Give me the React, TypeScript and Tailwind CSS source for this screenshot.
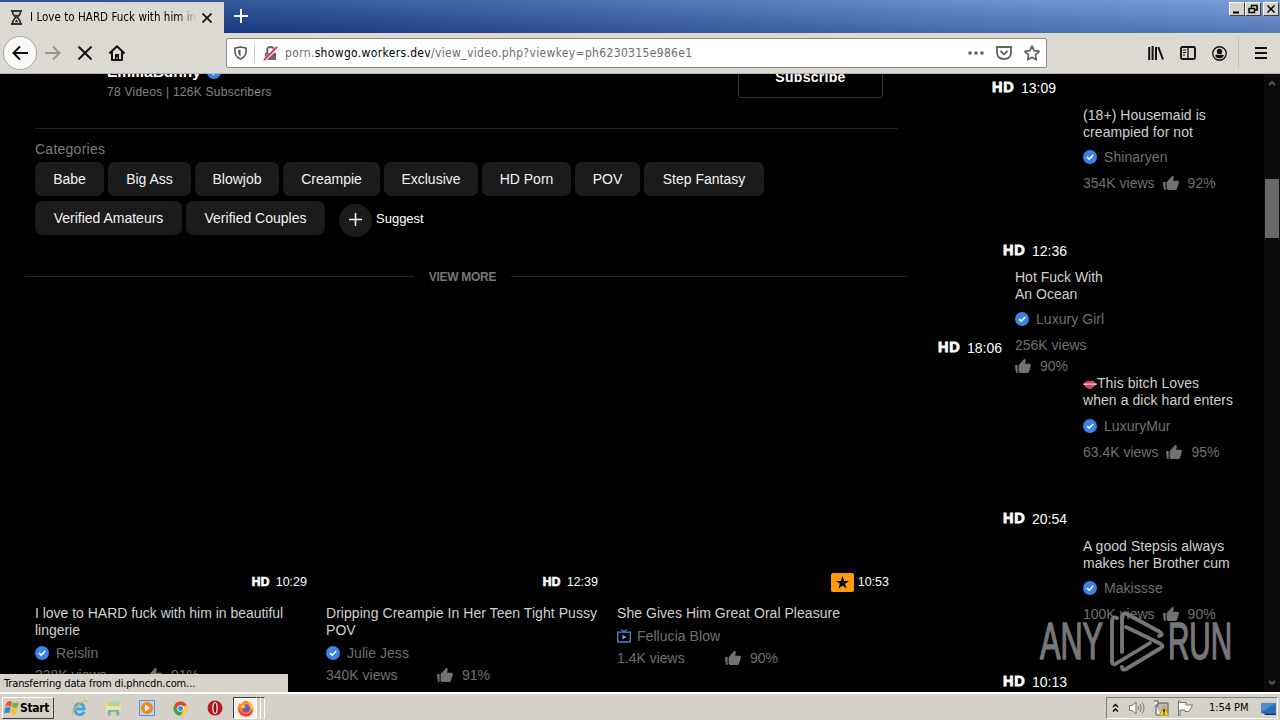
import React from "react";

const arial = "font-['Liberation_Sans',Arial,sans-serif]";
const ui = "font-['DejaVu_Sans_Condensed','DejaVu_Sans',sans-serif]";

function Verified() {
  return (
    <svg viewBox="0 0 14 14" className="h-[14px] w-[14px] shrink-0">
      <circle cx="7" cy="7" r="7" fill="#3c84e4" />
      <path d="M4 7.2 6.2 9.2 10.2 5" fill="none" stroke="#fff" strokeWidth="1.6" />
    </svg>
  );
}

function Thumb() {
  return (
    <svg viewBox="0 0 16 14" className="h-[14px] w-[16px] shrink-0" fill="#727272">
      <path d="M0 6h2.6v8H1.2Q.2 11 0 6ZM3.6 6.2 8 1.2Q8.600 0 9.800 0 11 .6 10.700 2L10 4.800H14.600Q16.200 5 15.900 6.600L14 12.800Q13.600 14 12.400 14H5.200L3.600 13Z" />
    </svg>
  );
}

function Duration({ time, small = false }: { time: string; small?: boolean }) {
  return (
    <div className={small ? "flex h-5 items-center text-[12.500px] text-white" : "flex h-5 items-center text-[14px] text-white"}>
      <span className={small ? "mr-[5px] w-[19px] text-[12px] font-bold tracking-[0.400px] [-webkit-text-stroke:0.700px_white]" : "mr-[5px] w-[24px] text-[14.500px] font-bold tracking-[0.900px] [-webkit-text-stroke:0.800px_white]"}>HD</span>
      <span>{time}</span>
    </div>
  );
}

function Author({ name, channel = false }: { name: string; channel?: boolean }) {
  return (
    <div className="flex h-5 items-center gap-[7px] text-[14px] tracking-[0.050px] text-[#707070]">
      {channel ? (
        <svg viewBox="0 0 14 14" className="-mr-px h-[14px] w-[14px]" fill="none" stroke="#4b86d2" strokeWidth="1.300">
          <path d="M.7 3.200H13.300V13H.7ZM4.500.5 7 3 9.500.5" />
          <path d="m5.500 5.800 4 2.300-4 2.300Z" fill="#75a9ec" stroke="none" />
        </svg>
      ) : (
        <Verified />
      )}
      <span>{name}</span>
    </div>
  );
}

function Percent({ value }: { value: string }) {
  return (
    <span className="flex items-center gap-[9px]">
      <Thumb />
      <span>{value}</span>
    </span>
  );
}

function SideItem({ lines, author, views, percent, lips = false }: { lines: string[]; author: string; views: string; percent: string; lips?: boolean }) {
  return (
    <div className="ml-[158px] whitespace-nowrap text-[14px]">
      <div className="leading-[17px] tracking-[0.060px] text-[#d0d0d0]">
        <div className="flex items-center">
          {lips && (
            <svg viewBox="0 0 15 10" className="mt-px h-[9px] w-[14px]">
              <path d="M0 4.500Q3 1 5.500.5L7.500 1.500 9.500.5Q12 1 15 4.500Q10 10 7.500 10 4 10 0 4.500" fill="#d7435c" />
              <path d="M0 4H15V5.300H0Z" fill="#f4dadd" />
            </svg>
          )}
          {lines[0]}
        </div>
        <div>{lines[1]}</div>
      </div>
      <div className={lips ? "mt-[7px]" : "mt-[6px]"}><Author name={author} /></div>
      <div className="mt-[6px] flex h-5 items-center gap-[8px] text-[#707070]">
        <span>{views}</span>
        <Percent value={percent} />
      </div>
    </div>
  );
}

function Card({ title, author, views, percent, time, tracking, star = false }: { title: string[]; author: string; views: string; percent: string; time: string; tracking: string; star?: boolean }) {
  return (
    <div className="w-[272px] whitespace-nowrap">
      <div className="flex h-5 items-center justify-end">
        {star ? (
          <>
            <span className="mr-1 flex h-[19px] w-[23px] items-center justify-center rounded-[2px] bg-[#ff9a0e]">
              <svg viewBox="0 0 24 24" className="h-[13px] w-[13px]"><path d="m12 0 3 9h9l-7.300 5.300L19.500 23 12 17.700 4.500 23l2.800-8.700L0 9h9Z" /></svg>
            </span>
            <span className="text-[12.500px] text-white">{time}</span>
          </>
        ) : (
          <Duration time={time} small />
        )}
      </div>
      <div className={`mt-[13px] text-[14px] leading-[17px] text-[#d0d0d0] ${tracking}`}>
        {title.map((t) => <div key={t}>{t}</div>)}
      </div>
      <div className={star ? "mt-[4px] tracking-[-0.100px]" : "-ml-px mt-[4px] pl-px"}><Author name={author} channel={star} /></div>
      <div className="mt-[2px] flex h-5 items-center text-[14px] text-[#707070]">
        <span className={star ? "w-[108px]" : "w-[111px]"}>{views}</span>
        <Percent value={percent} />
      </div>
    </div>
  );
}

function Chip({ label, width }: { label: string; width: string }) {
  return <div className={`flex h-[34px] items-center justify-center rounded-[7px] bg-[#1b1b1b] text-[14px] text-[#f2f2f2] ${width}`}>{label}</div>;
}

function WinButton({ children }: { children: React.ReactNode }) {
  return (
    <span className="flex h-[14px] w-[16px] items-center justify-center border border-t-white border-r-[#404040] border-b-[#404040] border-l-white bg-[#d6d2ca]">
      <svg viewBox="0 0 12 10" className="h-[10px] w-[12px]" fill="none" stroke="#000" strokeWidth="1.500">{children}</svg>
    </span>
  );
}

function Browser() {
  return (
    <header className={`relative shrink-0 ${ui}`}>
      <div className="flex h-[33px] bg-[linear-gradient(90deg,#14397f_0%,#22458c_25%,#5c83c4_75%,#7298d4_100%)]">
        <div className="flex h-full w-full bg-[linear-gradient(180deg,rgba(150,195,240,0.2),rgba(10,30,100,0.26))]">
          <div className="mt-[2px] flex w-[224px] items-center bg-[#dcd9d2]">
            <svg viewBox="0 0 14 16" className="ml-[10px] h-[15px] w-[13px]" fill="none" stroke="#333" strokeWidth="1.900">
              <path d="M1 1H13M1 15H13M3 1V4L6 8 3 12V15M11 1V4L8 8 11 12V15" />
              <path d="M5 5h4L7 8ZM5 13h4L7 10Z" fill="#333" stroke="none" />
            </svg>
            <span className="ml-[7px] w-[167px] overflow-hidden whitespace-nowrap bg-[linear-gradient(90deg,#000_88%,transparent)] bg-clip-text text-[11.500px] tracking-[0.030px] text-transparent">I Love to HARD Fuck with him in Be</span>
            <svg viewBox="0 0 10 10" className="ml-[5px] h-[10px] w-[10px]" stroke="#111" strokeWidth="1.700"><path d="m.5.5 9 9M9.500.5l-9 9" /></svg>
          </div>
          <svg viewBox="0 0 14 14" className="mt-[9px] ml-[10px] h-[14px] w-[14px]" stroke="#fff" strokeWidth="2"><path d="M7 0V14M0 7H14" /></svg>
          <div className="mt-[2px] mr-[1px] ml-auto flex">
            <WinButton><path d="M2 8.500H8" strokeWidth="2" /></WinButton>
            <WinButton><path d="M4.500 3.500V1.500H10V6H8M2 4.500H7.500V8.500H2Z" /></WinButton>
            <span className="w-[2px]" />
            <WinButton><path d="m2.500 1.500 7 7M9.500 1.500l-7 7" /></WinButton>
          </div>
        </div>
      </div>
      <div className="flex h-[41px] items-center border-b border-[#b5b2ab] bg-[#dcd9d2]">
        <span className="ml-[3px] flex h-[34px] w-[34px] items-center justify-center rounded-full border border-[#aaa7a0] bg-[#f8f8f6]">
          <svg viewBox="0 0 16 16" className="h-4 w-4" fill="none" stroke="#111" strokeWidth="2"><path d="M16 8H1.500M8 1.500 1.500 8 8 14.500" /></svg>
        </span>
        <svg viewBox="0 0 16 16" className="ml-[8px] h-4 w-4" fill="none" stroke="#999690" strokeWidth="2"><path d="M0 8H14.500M8 1.500 14.500 8 8 14.500" /></svg>
        <svg viewBox="0 0 14 14" className="ml-[17px] h-[14px] w-[14px]" stroke="#111" strokeWidth="2"><path d="m.5.5 13 13M13.500.5l-13 13" /></svg>
        <svg viewBox="0 0 16 16" className="ml-[17px] h-4 w-4" fill="none" stroke="#111" strokeWidth="2"><path d="M.5 8.500 8 1.200 15.500 8.500M3 7V15H13V7" strokeLinejoin="round" /><path d="M6 15V9H10V15H8.500V12H7.500V15Z" fill="#111" stroke="none" /></svg>
        <div className="ml-[101px] flex h-[30px] w-[821px] items-center rounded-[2px] border border-[#8d8a84] bg-white">
          <svg viewBox="0 0 14 15" className="ml-[7px] h-[14px] w-[13px]" fill="none" stroke="#555" strokeWidth="1.700"><path d="M7 1 13 2.200V6Q13 11.500 7 14 1 11.500 1 6V2.200Z" /><path d="M7 4V11Q4.500 9.500 4.500 7V4.500Z" fill="#555" stroke="none" /></svg>
          <span className="ml-[7px] h-[20px] w-px bg-[#ccc]" />
          <svg viewBox="0 0 16 16" className="ml-[8px] h-[15px] w-[15px]" fill="none"><path d="M2 7.500H14V15H2Z" fill="#666" /><path d="M4.500 8V4Q4.500 1 8 1T11.500 4V8" stroke="#666" strokeWidth="2" /><path d="M1 15.500 15 1.500" stroke="#fff" strokeWidth="3.500" /><path d="M1 15 15 1" stroke="#e22850" strokeWidth="2" /></svg>
          <span className="ml-[7px] whitespace-nowrap text-[12px] tracking-[0.340px] text-[#6c6c6c]">porn.<span className="text-black">showgo.workers.dev</span>/view_video.php?viewkey=ph6230315e986e1</span>
          <svg viewBox="0 0 16 4" className="ml-auto h-1 w-4" fill="#606060"><circle cx="2" cy="2" r="1.800" /><circle cx="8" cy="2" r="1.800" /><circle cx="14" cy="2" r="1.800" /></svg>
          <svg viewBox="0 0 16 14" className="ml-[12px] h-[14px] w-4" fill="none" stroke="#606060" strokeWidth="1.800"><path d="M1 1H15V6Q15 13 8 13T1 6ZM4.500 5 8 8.300 11.500 5" /></svg>
          <svg viewBox="0 0 16 16" className="mr-[6px] ml-[12px] h-4 w-4" fill="none" stroke="#606060" strokeWidth="1.700" strokeLinejoin="round"><path d="m8 1 2.100 4.700 5 .6-3.700 3.500 1 5L8 12.300 3.600 14.800l1-5L.9 6.300l5-.6Z" /></svg>
        </div>
        <svg viewBox="0 0 16 14" className="ml-[101px] h-[14px] w-4" fill="none" stroke="#111" strokeWidth="2"><path d="M1.200 1V14M4.600 0V14M8 1V14M10.300 1 15 13.500" /></svg>
        <svg viewBox="0 0 16 14" className="ml-[16px] h-[14px] w-4" fill="none" stroke="#111" strokeWidth="1.900"><rect x="1" y="1" width="14" height="12" rx="1.500" /><path d="M8 1V13" strokeWidth="1.300" /><path d="M3 4H6M3 6.500H6M3 9H5" strokeWidth="1" /></svg>
        <svg viewBox="0 0 16 16" className="ml-[16px] h-[15px] w-[15px]" fill="none" stroke="#111" strokeWidth="1.400"><circle cx="8" cy="8" r="7.200" /><circle cx="8" cy="5.800" r="2.800" fill="#111" stroke="none" /><path d="M3 10.500Q5.500 8 8 9.500 10.500 8 13 10.500 11 13.200 8 13.200T3 10.500" fill="#111" stroke="none" /></svg>
        <span className="ml-[11px] h-[32px] w-px bg-[#c7c3bb]" />
        <svg viewBox="0 0 12 12" className="ml-[16px] h-[12px] w-[12px]" stroke="#111" strokeWidth="2"><path d="M0 1H12M0 6H12M0 11H12" /></svg>
      </div>
    </header>
  );
}

function Watermark() {
  return (
    <svg viewBox="0 0 200 64" className="absolute top-[610px] left-[1036px] h-[64px] w-[200px]" fill="none" stroke="#777" strokeWidth="3.800" strokeLinecap="round" strokeLinejoin="round">
      <g className={arial} fill="#777" strokeWidth="1.600" fontSize="52">
        <text x="4" y="49" textLength="63" lengthAdjust="spacingAndGlyphs">ANY</text>
        <text x="132" y="49" textLength="64" lengthAdjust="spacingAndGlyphs">RUN</text>
      </g>
      <path d="M81 8Q76 6 76 11V52Q77 56 81 53L114 33" />
      <path d="M86 42V6Q87 2 91 4L124 22Q128 25 123 26" />
      <path d="M90 17 125 34Q128 36 125 38L90 59Q86 61 86 57" />
    </svg>
  );
}

function Taskbar() {
  return (
    <footer className={`flex h-[28px] shrink-0 items-center border-t-2 border-white bg-[#d5d0c8] pt-[2px] ${ui}`}>
      <div className="ml-[2px] flex h-[22px] w-[52px] items-center border border-t-white border-r-[#404040] border-b-[#404040] border-l-white">
        <svg viewBox="0 0 16 16" className="ml-px h-4 w-4 shrink-0"><path d="M3 2Q6 0 8 2L7 7Q4 5 1 7Z" fill="#e85d2e" /><path d="M9 2Q12 4 15 2L13 8Q11 9 8 7Z" fill="#76b82f" /><path d="M1 8Q4 6 7 8L5 13Q3 12 0 14Z" fill="#3f83cf" /><path d="M8 8Q10 10 13 9L12 14Q9 16 6 13Z" fill="#f4bf28" /></svg>
        <span className="text-[12px] font-bold tracking-[-0.300px]">Start</span>
      </div>
      <svg viewBox="0 0 18 18" className="ml-[17px] h-[17px] w-[17px]" fill="none"><path d="M14 12.500Q12 16 8.500 15.500 4 14.500 4 9.500 4.500 4.500 9 4 14 4.500 14 9.500H5" stroke="#42a7de" strokeWidth="3" /><path d="M2 16Q-1 13 8 5T17 3" stroke="#e3b94b" strokeWidth="1.300" /></svg>
      <svg viewBox="0 0 18 16" className="ml-[17px] h-[16px] w-[17px]"><path d="M1 2H7L8 4H16V15H1Z" fill="#ecd27b" /><path d="M4 1H15V6H4Z" fill="#a7d6a0" /><path d="M1 6H17V12H1Z" fill="#f3e2a0" /><path d="M3 10H15V16H12V12H6V16H3Z" fill="#61b4dc" /></svg>
      <svg viewBox="0 0 16 16" className="ml-[17px] h-4 w-4"><path d="M.5.5H15.500V15.500H.5Z" fill="#b8d7f1" stroke="#5c93c6" /><circle cx="8" cy="8" r="6" fill="#f18518" /><path d="m6 4.500 5.500 3.500L6 11.500Z" fill="#fff" /></svg>
      <svg viewBox="0 0 16 16" className="ml-[18px] h-[15px] w-[15px]"><circle cx="8" cy="8" r="7.500" fill="#f6cc38" /><path d="M1.500 4.200A7.500 7.500 0 0 1 14.800 5H8L5 10Z" fill="#dd4638" /><path d="M1.500 4.200A7.500 7.500 0 0 0 8 15.500L11 10H5Z" fill="#39a354" /><circle cx="8" cy="8" r="3.500" fill="#fff" /><circle cx="8" cy="8" r="2.700" fill="#4285e7" /></svg>
      <svg viewBox="0 0 16 16" className="ml-[19px] h-4 w-4"><circle cx="8" cy="8" r="7.500" fill="#bd1720" /><ellipse cx="8" cy="8" rx="2.800" ry="6" fill="#fff" /><ellipse cx="8" cy="8" rx="1.500" ry="5" fill="#8a1018" /></svg>
      <div className="ml-[10px] flex h-[22px] w-[24px] items-center justify-center border border-t-[#404040] border-r-white border-b-white border-l-[#404040] bg-[#f5f3f0]">
        <svg viewBox="0 0 16 16" className="h-[17px] w-[17px]"><path d="M2 3 4 4Q6 0 10 1 15 3 15.500 8 15 15.500 8 15.500T.5 8Z" fill="#ff8c22" /><path d="M1 7Q2 15 8 15.500T15 9Q12 13 8 13T1 7" fill="#f33b45" /><circle cx="8.500" cy="8" r="3.700" fill="#7554c5" /><path d="M4 5Q8 4 8 7L5 8ZM10 1Q15 3 15 9L12 6Z" fill="#ffd234" /></svg>
      </div>
      <span className="h-[22px] w-[4px] border-t border-r border-t-[#404040] border-r-white" />
      <span className="h-[22px] w-[4px] border-t border-r border-t-[#404040] border-r-white" />
      <div className="mr-[2px] ml-auto flex h-[22px] w-[172px] items-center border border-t-[#808080] border-r-white border-b-white border-l-[#808080]">
        <svg viewBox="0 0 7 10" className="ml-[5px] h-[10px] w-[7px]" fill="none" stroke="#000" strokeWidth="1.300"><path d="m1 4 2.500-2.500L6 4M1 8.500 3.500 6 6 8.500" /></svg>
        <svg viewBox="0 0 16 14" className="ml-[10px] h-[14px] w-4" fill="none" stroke="#77746f"><path d="M.5 4.500H3L7 1V13L3 9.500H.5Z" fill="#f8f8f8" /><path d="M9 5Q10.500 7 9 9M11 3Q13.500 7 11 11M13 1.500Q17 7 13 12.500" /></svg>
        <svg viewBox="0 0 16 16" className="ml-[8px] h-4 w-4"><path d="M4 3H15V13H4Z" fill="#bbb" stroke="#555" /><path d="M1 1H5V5H3V15H8" fill="#eee" stroke="#555" /><path d="m11 6 5 9.500H6Z" fill="#f5cb19" stroke="#987810" strokeWidth=".5" /><path d="M11 9V12.500M11 13.500V14.500" stroke="#000" strokeWidth="1.300" /></svg>
        <svg viewBox="0 0 16 16" className="ml-[8px] h-4 w-4" fill="#fff" stroke="#77746f"><path d="M1.500 1V15.500H3V10H8V11.500H12L15.500 5H9V2.500H3V1Z" /></svg>
        <span className="ml-[16px] whitespace-nowrap text-[11px] tracking-[-0.050px]">1:54 PM</span>
        <svg viewBox="0 0 16 14" className="mr-[1px] ml-auto h-[13px] w-[15px]"><path d="M0 1H16V12H0Z" fill="#286cbe" /><path d="M0 1H16L0 11Z" fill="#4c8cd5" /><path d="M2 12H16V14H5Z" fill="#12325f" /></svg>
      </div>
    </footer>
  );
}

export default function App() {
  return (
    <div className={`relative flex h-[720px] w-[1280px] flex-col overflow-hidden bg-black ${arial}`}>
      <Browser />
      <div className="flex h-[618px] overflow-hidden">
        <main className="w-[925px] shrink-0">
          <div className="flex h-[54px] items-start pl-[107px]">
            <div className="-mt-[11px] w-[631px]">
              <div className="flex h-[18px] items-center gap-[6px] text-[15.500px] font-bold text-white">EmiliaBunny <Verified /></div>
              <div className="mt-px h-5 text-[12px] leading-5 tracking-[0.250px] text-[#858585]">78 Videos | 126K Subscribers</div>
            </div>
            <div className="-mt-[18px] flex h-[42px] w-[145px] items-center justify-center rounded-[3px] border border-[#303030] text-[14px] font-bold tracking-[0.300px] text-white">Subscribe</div>
          </div>
          <div className="ml-[35px] h-px w-[863px] bg-[#242424]" />
          <div className="mt-[10px] ml-[35px] h-5 text-[14px] leading-5 tracking-[0.250px] text-[#7d7d7d]">Categories</div>
          <div className="mt-[3px] ml-[35px] flex gap-1">
            <Chip label="Babe" width="w-[69px]" />
            <Chip label="Big Ass" width="w-[83px]" />
            <Chip label="Blowjob" width="w-[84px]" />
            <Chip label="Creampie" width="w-[97px]" />
            <Chip label="Exclusive" width="w-[94px]" />
            <Chip label="HD Porn" width="w-[89px]" />
            <Chip label="POV" width="w-[65px]" />
            <Chip label="Step Fantasy" width="w-[120px]" />
          </div>
          <div className="mt-[5px] ml-[35px] flex gap-1">
            <Chip label="Verified Amateurs" width="w-[147px]" />
            <Chip label="Verified Couples" width="w-[139px]" />
            <div className="mt-[3px] ml-[10px] flex h-[33px] w-[33px] items-center justify-center rounded-full bg-[#1b1b1b]">
              <svg viewBox="0 0 13 13" className="-mt-[2px] h-[13px] w-[13px]" stroke="#fff" strokeWidth="1.500"><path d="M6.500 0V13M0 6.500H13" /></svg>
            </div>
            <span className="text-[13px] leading-[35px] text-white">Suggest</span>
          </div>
          <div className="mt-[29px] ml-[25px] flex h-5 w-[883px] items-center text-[12px] font-bold tracking-[-0.300px] text-[#777]">
            <span className="h-px w-[389px] bg-[#242424]" />
            <span className="w-[97px] pt-px text-center">VIEW MORE</span>
            <span className="h-px flex-1 bg-[#242424]" />
          </div>
          <div className="mt-[286px] ml-[35px] flex gap-[19px]">
            <Card title={["I love to HARD fuck with him in beautiful", "lingerie"]} tracking="tracking-[-0.020px]" author="Reislin" views="238K views" percent="91%" time="10:29" />
            <Card title={["Dripping Creampie In Her Teen Tight Pussy", "POV"]} tracking="tracking-[0.050px]" author="Julie Jess" views="340K views" percent="91%" time="12:39" />
            <Card title={["She Gives Him Great Oral Pleasure"]} tracking="tracking-[0.040px]" author="Fellucia Blow" views="1.4K views" percent="90%" time="10:53" star />
          </div>
        </main>
        <aside className="w-[339px] shrink-0">
          <div className="pt-[4px] pl-[67px]"><Duration time="13:09" /></div>
          <div className="mt-[9px]"><SideItem lines={["(18+) Housemaid is", "creampied for not"]} author="Shinaryen" views="354K views" percent="92%" /></div>
          <div className="mt-[48px] pl-[78px]"><Duration time="12:36" /></div>
          <div className="mt-[8px] flex h-[107px] pl-[13px] text-[14px]">
            <div className="w-[77px] pt-[69px]"><Duration time="18:06" /></div>
            <div className="whitespace-nowrap text-[#707070]">
              <div className="leading-[17px] text-[#d0d0d0]">Hot Fuck With<br />An Ocean</div>
              <div className="mt-[6px]"><Author name="Luxury Girl" /></div>
              <div className="mt-[6px] h-5 leading-5">256K views</div>
              <div className="mt-px flex h-5 items-center"><Percent value="90%" /></div>
            </div>
          </div>
          <div className="-mt-px"><SideItem lips lines={["This bitch Loves", "when a dick hard enters"]} author="LuxuryMur" views="63.4K views" percent="95%" /></div>
          <div className="mt-[47px] pl-[78px]"><Duration time="20:54" /></div>
          <div className="mt-[9px]"><SideItem lines={["A good Stepsis always", "makes her Brother cum"]} author="Makissse" views="100K views" percent="90%" /></div>
          <div className="mt-[48px] pl-[78px]"><Duration time="10:13" /></div>
        </aside>
        <div className="flex w-4 flex-col items-center bg-[#0b0b0b]">
          <svg viewBox="0 0 8 6" className="mt-[6px] h-[6px] w-[8px]" fill="none" stroke="#555" strokeWidth="2"><path d="m1 5 3-3 3 3" /></svg>
          <span className="mt-[93px] h-[59px] w-[14px] bg-[#686868]" />
          <svg viewBox="0 0 8 6" className="mt-auto mb-[6px] h-[6px] w-[8px]" fill="none" stroke="#555" strokeWidth="2"><path d="m1 1 3 3 3-3" /></svg>
        </div>
      </div>
      <div className={`absolute top-[674px] left-0 h-[18px] w-[288px] bg-[#d6d2ca] pl-[4px] text-[11px] leading-[20px] tracking-[-0.130px] whitespace-nowrap text-black ${ui}`}>Transferring data from di.phncdn.com...</div>
      <Watermark />
      <Taskbar />
    </div>
  );
}
